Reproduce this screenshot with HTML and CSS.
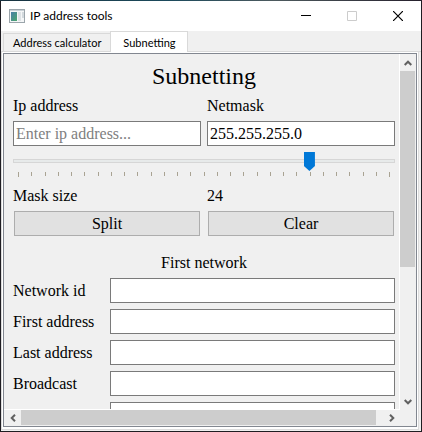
FILE: index.html
```html
<!DOCTYPE html>
<html lang="en">
<head>
<meta charset="utf-8">
<title>IP address tools</title>
<link rel="stylesheet" href="styles.css">
</head>
<body>
<div class="window">
  <header class="titlebar">
    <svg class="app-icon" width="16" height="14" viewBox="0 0 16 14">
      <defs><linearGradient id="pane" x1="0" y1="0" x2="1" y2="1"><stop offset="0" stop-color="#4a7fa8"/><stop offset="1" stop-color="#4aa66c"/></linearGradient></defs>
      <rect x=".5" y=".5" width="15" height="13" fill="#f4f6f7" stroke="#9ba5ab"/>
      <path d="M1 1.500h14" stroke="#c9d1d6"/>
      <rect x="2" y="3" width="6" height="9" fill="url(#pane)"/>
      <rect x="9" y="3" width="3" height="9" fill="#dde2e5"/>
      <rect x="13" y="3" width="2" height="6" fill="#d2d9dd"/>
    </svg>
    <h1 class="caption">IP address tools</h1>
    <button class="win-btn" aria-label="Minimize"><svg width="10" height="10" viewBox="0 0 10 10"><path d="M0 4.500h10" stroke="#000"/></svg></button>
    <button class="win-btn" aria-label="Maximize" disabled><svg width="10" height="10" viewBox="0 0 10 10"><path d="M.5.5h9v9h-9z" fill="none" stroke="#ccc"/></svg></button>
    <button class="win-btn" aria-label="Close"><svg width="10" height="10" viewBox="0 0 10 10"><path d="M0 0l10 10M10 0L0 10" stroke="#000" stroke-width="1.200"/></svg></button>
  </header>
  <nav class="tabs" role="tablist">
    <button class="tab" role="tab" aria-selected="false">Address calculator</button>
    <button class="tab active" role="tab" aria-selected="true">Subnetting</button>
  </nav>
  <main class="pane">
    <div class="scroll-area">
      <form class="content">
        <h2 class="heading">Subnetting</h2>
        <div class="pair">
          <label for="ip">Ip address</label>
          <label for="mask">Netmask</label>
          <input class="field" id="ip" type="text" placeholder="Enter ip address...">
          <input class="field" id="mask" type="text" value="255.255.255.0">
        </div>
        <div class="slider">
          <input type="range" id="size" min="2" max="30" value="24">
          <div class="ticks"><i></i><i></i><i></i><i></i><i></i><i></i><i></i><i></i><i></i><i></i><i></i><i></i><i></i><i></i><i></i><i></i><i></i><i></i><i></i><i></i><i></i><i></i><i></i><i></i><i></i><i></i><i></i><i></i><i></i></div>
        </div>
        <div class="pair">
          <label for="size">Mask size</label>
          <output for="size">24</output>
          <button class="action" type="button">Split</button>
          <button class="action" type="button">Clear</button>
        </div>
        <h3 class="subheading">First network</h3>
        <div class="rows">
          <label for="network">Network id</label><input class="field" id="network" type="text">
          <label for="first">First address</label><input class="field" id="first" type="text">
          <label for="last">Last address</label><input class="field" id="last" type="text">
          <label for="broadcast">Broadcast</label><input class="field" id="broadcast" type="text">
          <span></span><input class="field" type="text" aria-label="Hosts">
        </div>
      </form>
      <div class="bar vertical">
        <button class="arrow" aria-label="Scroll up"><svg width="8" height="6" viewBox="0 0 8 6"><path d="M.7 5L4 1.700 7.300 5"/></svg></button>
        <div class="track"><div class="thumb"></div></div>
        <button class="arrow" aria-label="Scroll down"><svg width="8" height="6" viewBox="0 0 8 6"><path d="M.7 1L4 4.300 7.300 1"/></svg></button>
      </div>
      <div class="bar horizontal">
        <button class="arrow" aria-label="Scroll left"><svg width="6" height="8" viewBox="0 0 6 8"><path d="M5 .7L1.700 4 5 7.300"/></svg></button>
        <div class="track"><div class="thumb"></div></div>
        <button class="arrow" aria-label="Scroll right"><svg width="6" height="8" viewBox="0 0 6 8"><path d="M1 .7L4.300 4 1 7.300"/></svg></button>
      </div>
    </div>
  </main>
</div>
</body>
</html>
```
FILE: styles.css
```css
* { box-sizing: border-box; }

body {
  margin: 0;
  height: 100vh;
  padding: 1px;
  background: linear-gradient(90deg, #17323f, #1c4a5c 40%, #4d5a5e 65%, #26202c) top / 100% 1px no-repeat #1f1d22;
  color: #000;
  font: 16px/19px "Liberation Serif", "Times New Roman", serif;
}

h1, h2, h3 { margin: 0; font-weight: normal; }
button { padding: 0; border: 0; background: none; color: inherit; font: inherit; }

.window {
  height: 100%;
  display: flex;
  flex-direction: column;
  background: #f0f0f0;
}

/* Title bar */
.titlebar {
  flex: none;
  height: 30px;
  padding-left: 8px;
  display: flex;
  align-items: center;
  background: #fff;
}
.caption {
  flex: 1;
  margin-left: 5px;
  font: 12px/16px Lato, "Segoe UI", sans-serif;
}
.win-btn {
  width: 46px;
  height: 30px;
  display: flex;
  align-items: center;
  justify-content: center;
}

/* Tabs */
.tabs {
  flex: none;
  height: 21px;
  padding-left: 2px;
  display: flex;
  align-items: flex-end;
  background: linear-gradient(#d9d9d9, #d9d9d9) bottom / 100% 1px no-repeat;
  font: 11px/14px Lato, Tahoma, sans-serif;
}
.tab {
  height: 19px;
  min-width: 78px;
  padding: 1px 9px 0;
  border: 1px solid #d9d9d9;
  border-right: 0;
}
.tab.active {
  height: 21px;
  border-right: 1px solid #d9d9d9;
  border-bottom: 0;
  background: #fff;
}

/* Tab page */
.pane {
  flex: 1;
  min-height: 0;
  margin-right: 2px;
  margin-bottom: 1px;
  padding: 1px 1px 2px;
  border: 1px solid #dcdcdc;
  border-top: 0;
  background: #fff;
}
.scroll-area {
  height: 100%;
  border: 1px solid #828790;
  display: grid;
  grid-template: minmax(0, 1fr) 16px / minmax(0, 1fr) 16px;
  background: #f0f0f0;
}
.content {
  padding: 9px 4px 0 9px;
  border-right: 1px solid #fff;
  border-bottom: 1px solid #fff;
  overflow: hidden;
  display: flex;
  flex-direction: column;
  gap: 6px;
}
.content > * { flex: none; }
.heading { font-size: 24px; line-height: 27px; text-align: center; }
.subheading { margin-top: 11px; font-size: 16px; text-align: center; }

.pair {
  display: grid;
  grid-template-columns: 1fr 1fr;
  gap: 6px;
}
.rows {
  display: grid;
  grid-template-columns: 91px 1fr;
  gap: 6px;
  align-items: center;
}
.field {
  width: 100%;
  height: 25px;
  padding: 0 2px;
  border: 1px solid #7a7a7a;
  border-radius: 0;
  background: #fff;
  color: #000;
  font: inherit;
  outline: 0;
}
.field::placeholder { color: #808080; }
.action {
  height: 25px;
  margin: 0 1px;
  border: 1px solid #adadad;
  background: #e1e1e1;
}

/* Mask slider */
.slider { height: 28px; }
.slider input {
  display: block;
  width: 100%;
  height: 18px;
  margin: 0;
  appearance: none;
  background: none;
}
.slider input::-webkit-slider-runnable-track {
  height: 4px;
  border: 1px solid #d6d6d6;
  background: #e7eaea;
}
.slider input::-webkit-slider-thumb {
  appearance: none;
  width: 11px;
  height: 19px;
  margin-top: -8px;
  margin-right: -1px;
  background: #0078d7;
  clip-path: polygon(0 0, 100% 0, 100% 74%, 50% 100%, 0 74%);
}
.ticks {
  margin-top: 2px;
  padding: 0 5px;
  display: flex;
  justify-content: space-between;
}
.ticks i { width: 1px; height: 4px; background: #a9a393; }
.ticks i:first-child, .ticks i:last-child { height: 5px; }

/* Scroll bars */
.bar { display: flex; background: #f0f0f0; }
.vertical { flex-direction: column; }
.horizontal { grid-row: 2; }
.arrow {
  flex: none;
  width: 17px;
  height: 17px;
  display: flex;
  align-items: center;
  justify-content: center;
}
.vertical .arrow { width: 16px; }
.horizontal .arrow { height: 16px; }
.arrow path { fill: none; stroke: #606060; stroke-width: 2; }
.track { flex: 1; }
.thumb { background: #cdcdcd; }
.vertical .thumb { height: 61%; width: 15px; }
.horizontal .thumb { width: 98%; height: 15px; }
```
